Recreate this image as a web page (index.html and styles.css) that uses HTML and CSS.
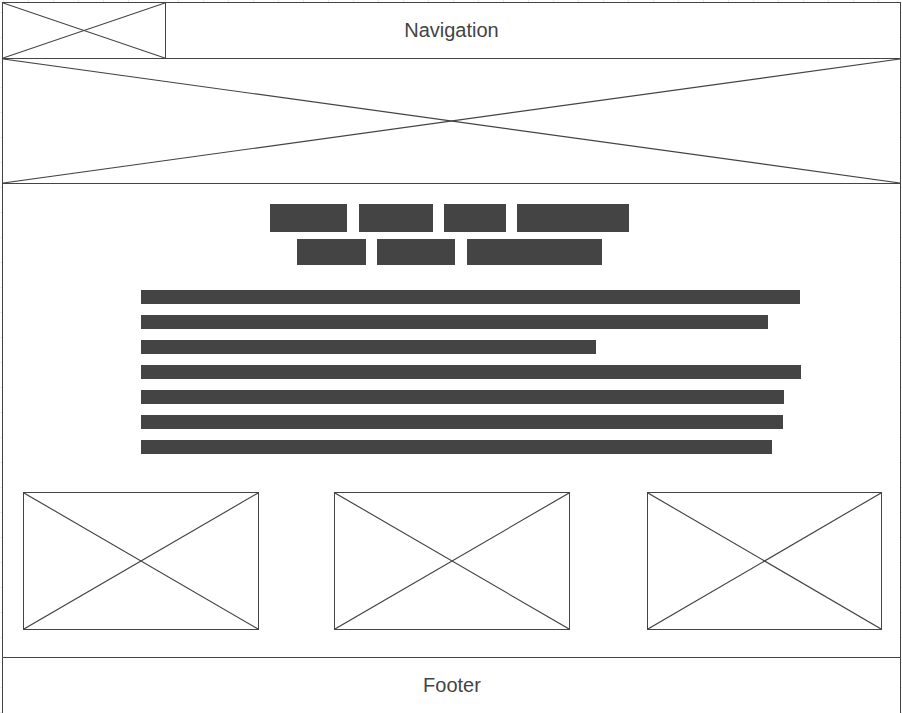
FILE: index.html
```html
<!DOCTYPE html>
<html lang="en">
<head>
<meta charset="utf-8">
<title>Wireframe</title>
<link rel="stylesheet" href="styles.css">
</head>
<body>
<div class="frame">
  <header class="nav">
    <div class="logo">
      <svg class="xsvg" viewBox="0 0 100 100" preserveAspectRatio="none"><line x1="0" y1="0" x2="100" y2="100"/><line x1="0" y1="100" x2="100" y2="0"/></svg>
    </div>
    <div class="nav-text">Navigation</div>
  </header>
  <section class="hero">
    <svg class="xsvg" viewBox="0 0 100 100" preserveAspectRatio="none"><line x1="0" y1="0" x2="100" y2="100"/><line x1="0" y1="100" x2="100" y2="0"/></svg>
  </section>
  <main class="content">
    <div class="tags">
      <div class="tag-row row1">
        <span class="tag" style="width:77px"></span>
        <span class="tag" style="width:74px"></span>
        <span class="tag" style="width:62px"></span>
        <span class="tag" style="width:112px"></span>
      </div>
      <div class="tag-row row2">
        <span class="tag" style="width:69px"></span>
        <span class="tag" style="width:78px"></span>
        <span class="tag" style="width:135px"></span>
      </div>
    </div>
    <div class="lines">
      <span class="line" style="width:659px"></span>
      <span class="line" style="width:627px"></span>
      <span class="line" style="width:455px"></span>
      <span class="line" style="width:660px"></span>
      <span class="line" style="width:643px"></span>
      <span class="line" style="width:642px"></span>
      <span class="line" style="width:631px"></span>
    </div>
    <div class="images">
      <div class="img img-a"><svg class="xsvg" viewBox="0 0 100 100" preserveAspectRatio="none"><line x1="0" y1="0" x2="100" y2="100"/><line x1="0" y1="100" x2="100" y2="0"/></svg></div>
      <div class="img img-b"><svg class="xsvg" viewBox="0 0 100 100" preserveAspectRatio="none"><line x1="0" y1="0" x2="100" y2="100"/><line x1="0" y1="100" x2="100" y2="0"/></svg></div>
      <div class="img img-c"><svg class="xsvg" viewBox="0 0 100 100" preserveAspectRatio="none"><line x1="0" y1="0" x2="100" y2="100"/><line x1="0" y1="100" x2="100" y2="0"/></svg></div>
    </div>
  </main>
  <footer class="footer">Footer</footer>
</div>
</body>
</html>
```

FILE: styles.css
```css
html, body {
  margin: 0;
  padding: 0;
}
body {
  padding: 2px 0 0 2px;
  background-color: #fff;
  background-image:
    linear-gradient(to right, #ebebeb 1px, transparent 1px),
    linear-gradient(to bottom, #ebebeb 1px, transparent 1px);
  background-size: 25px 25px;
  background-position: 3px 12px;
  font-family: "Liberation Sans", Arial, sans-serif;
  color: #444;
  overflow: hidden;
}
.frame {
  width: 899px;
  box-sizing: border-box;
  border: 1px solid #444;
  border-bottom: none;
  background: #fff;
}
.xsvg {
  display: block;
  width: 100%;
  height: 100%;
}
.xsvg line {
  stroke: #444;
  stroke-width: 1.15;
  vector-effect: non-scaling-stroke;
}
.nav {
  display: grid;
  grid-template-columns: 1fr;
  height: 55px;
  border-bottom: 1px solid #444;
}
.logo, .nav-text {
  grid-row: 1;
  grid-column: 1;
}
.logo {
  justify-self: start;
  width: 162px;
  height: 55px;
  border-right: 1px solid #444;
}
.nav-text {
  justify-self: center;
  align-self: center;
  font-size: 20px;
  line-height: 24px;
  margin-top: -1px;
}
.hero {
  height: 124px;
  border-bottom: 1px solid #444;
}
.content {
  height: 474px;
  box-sizing: border-box;
  padding-top: 20px;
  border-bottom: 1px solid #444;
}
.tags {
  display: flex;
  flex-direction: column;
  gap: 7px;
}
.tag-row {
  display: flex;
  justify-content: center;
  gap: 11px;
  padding-right: 4px;
}
.row1 .tag { height: 28px; }
.row1 .tag:first-child { margin-right: 1px; }
.row2 .tag { height: 26px; }
.row2 .tag:nth-child(2) { margin-right: 1px; }
.tag {
  display: block;
  background: #444;
}
.lines {
  display: flex;
  flex-direction: column;
  gap: 11px;
  padding-left: 138px;
  margin-top: 25px;
}
.line {
  display: block;
  height: 14px;
  background: #444;
}
.images {
  display: flex;
  justify-content: space-between;
  padding: 0 18px 0 20px;
  margin-top: 38px;
}
.img {
  width: 236px;
  height: 138px;
  box-sizing: border-box;
  border: 1px solid #444;
}
.img-b { margin-left: -1px; }
.img-c { width: 235px; margin-left: 1px; }
.footer {
  height: 56px;
  box-sizing: border-box;
  display: flex;
  align-items: center;
  justify-content: center;
  font-size: 20px;
  padding-left: 1px;
  padding-bottom: 2px;
}
```
